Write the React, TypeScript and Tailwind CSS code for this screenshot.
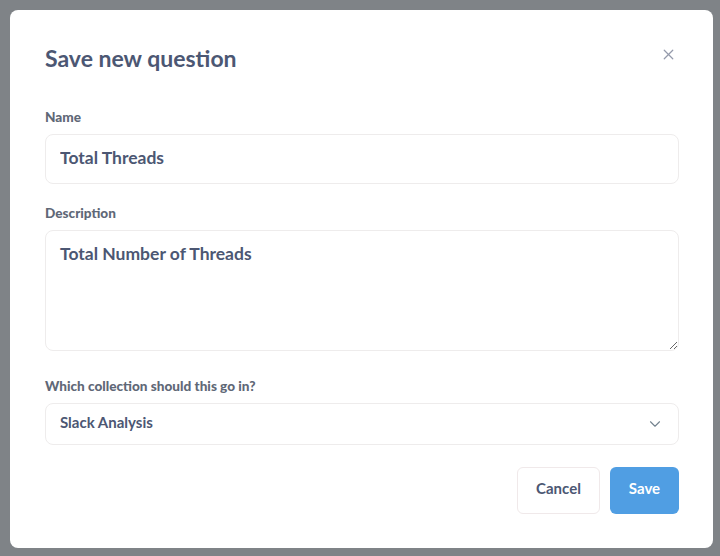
import { X, ChevronDown } from 'lucide-react';

const FONT = { fontFamily: 'Lato, "Noto Sans", sans-serif' };

const Label = ({ children }: { children: React.ReactNode }) => (
  <label className="block text-[13.6px] font-black text-[#5f6877] mb-[9px] leading-4">
    {children}
  </label>
);

export default function App() {
  return (
    <div className="w-[720px] h-[556px] bg-[#7f8387] p-[10px] pr-[7px] pb-[8px]" style={FONT}>
      <div className="relative h-full bg-white rounded-lg pl-[35px] pr-[34px] pt-[34px]">
        <button className="absolute right-[36px] top-[36px] text-[#949aab]">
          <X size={17} strokeWidth={1.75} />
        </button>

        <h2 className="text-[23px] font-bold text-[#4c5773] leading-7">Save new question</h2>

        <div className="mt-[37px]">
          <Label>Name</Label>
          <input
            defaultValue="Total Threads"
            className="w-full h-[50px] rounded-lg border border-[#eeecec] px-[14px] pb-[4px] text-[17.5px] font-bold text-[#4c5773] outline-none"
            style={FONT}
          />
        </div>

        <div className="mt-[21px]">
          <Label>Description</Label>
          <textarea
            defaultValue="Total Number of Threads"
            className="block w-full h-[121px] rounded-lg border border-[#eeecec] px-[14px] pt-[10px] text-[17.5px] font-bold text-[#4c5773] outline-none"
            style={FONT}
          />
        </div>

        <div className="mt-[27px]">
          <Label>Which collection should this go in?</Label>
          <div className="flex items-center justify-between h-[42px] rounded-lg border border-[#eeecec] pl-[14px] pr-[14px]">
            <span className="text-[15px] font-bold text-[#4c5773] -mt-[4px]">Slack Analysis</span>
            <ChevronDown size={18} strokeWidth={1.5} className="text-[#74838f]" />
          </div>
        </div>

        <div className="flex justify-end gap-[10px] mt-[22px]">
          <button className="w-[83px] h-[47px] rounded-md border border-[#f0e9ea] pb-[4px] text-[15px] font-bold text-[#4c5773]">
            Cancel
          </button>
          <button className="w-[69px] h-[47px] rounded-md bg-[#509ee3] pb-[4px] text-[15px] font-bold text-white">
            Save
          </button>
        </div>
      </div>
    </div>
  );
}
